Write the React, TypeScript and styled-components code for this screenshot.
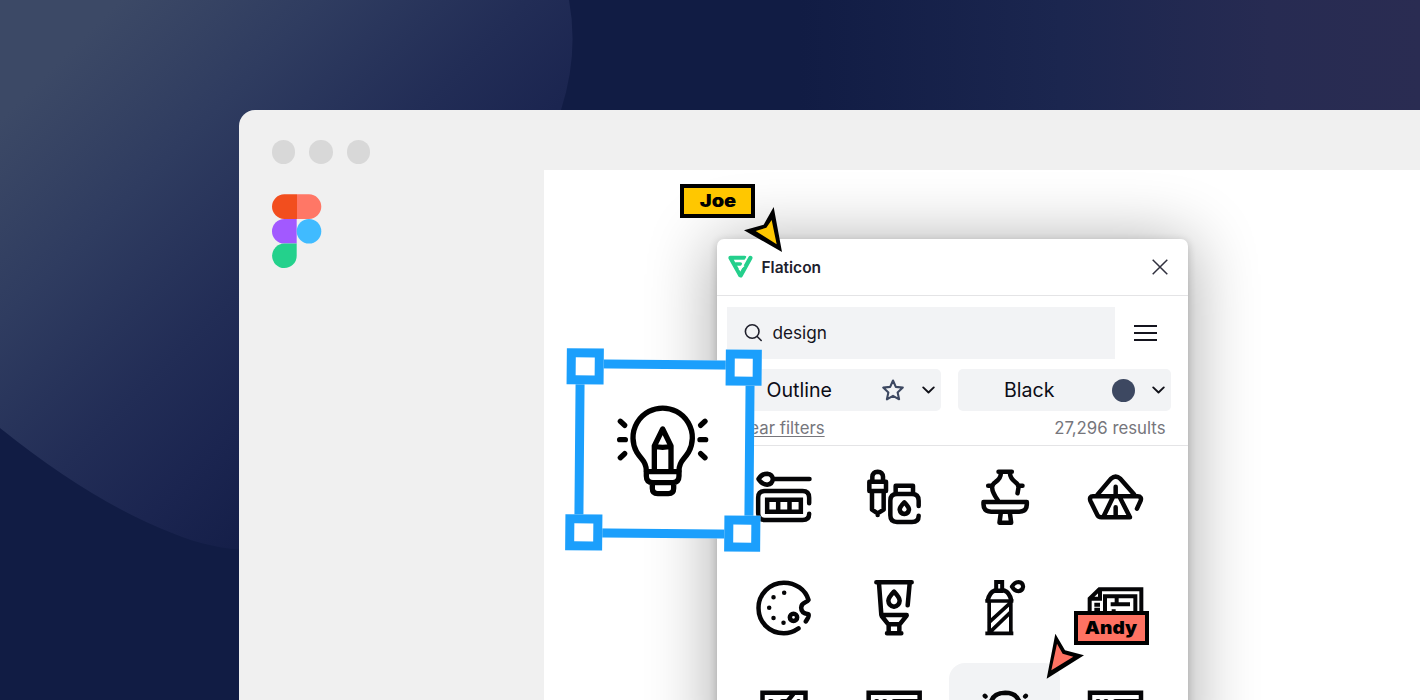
import React from "react";
import styled, { createGlobalStyle } from "styled-components";

const Global = createGlobalStyle`
  *, *::before, *::after { box-sizing: border-box; }
  body { margin: 0; overflow: hidden; font-family: Inter, "Liberation Sans", sans-serif; }
`;

const Stage = styled.main`
  position: relative;
  width: 1420px;
  height: 700px;
  overflow: hidden;
  padding: 110px 0 0 239px;
  background: linear-gradient(90deg, #111c44 0, #111c44 800px, #1b264f 1060px, #272b52 1270px, #2a2c52 1420px);
`;

const Backdrop = styled.svg`
  position: absolute;
  top: 0;
  left: 0;
`;

const Window = styled.section`
  position: relative;
  display: grid;
  grid-template: 60px 1fr / 305px 1fr;
  height: 590px;
  border-radius: 16px 0 0 0;
  background: #f0f0f0;
`;

const TitleBar = styled.header`
  grid-column: 1 / -1;
  display: flex;
  gap: 14px;
  padding: 30px 0 0 32.5px;
`;

const Dot = styled.i`
  width: 23.5px;
  height: 23.5px;
  border-radius: 50%;
  background: #d8d8d8;
`;

const Sidebar = styled.aside`
  padding: 24px 0 0 32.5px;
`;

const Canvas = styled.div`
  overflow: hidden;
  padding: 69px 0 0 173px;
  background: #fff;
`;

const Panel = styled.article`
  width: 471px;
  height: 520px;
  border-radius: 7px 7px 0 0;
  background: #fff;
  box-shadow: 0 2px 9px rgba(0, 0, 0, 0.2), 0 6px 66px 4px rgba(0, 0, 0, 0.32);
`;

const PanelHeader = styled.div`
  display: flex;
  align-items: center;
  height: 57px;
  padding: 0 20px 0 10px;
  border-bottom: 1.5px solid #e4e4e6;
`;

const PanelName = styled.h1`
  flex: 1;
  margin: 0 0 0 8.5px;
  font-size: 15.5px;
  font-weight: 600;
  color: #20202c;
`;

const SearchRow = styled.div`
  display: flex;
  align-items: center;
  gap: 19px;
  padding: 11px 0 0 10px;
`;

const SearchField = styled.div`
  display: flex;
  align-items: center;
  gap: 10px;
  width: 388px;
  height: 52px;
  padding: 0 0 2px 16.5px;
  background: #f2f3f5;
  font-size: 17.2px;
  color: #141420;
`;

const Filters = styled.div`
  display: flex;
  gap: 17px;
  padding: 10px 0 0 10px;
`;

const Filter = styled.div<{ $indent: number }>`
  display: flex;
  align-items: center;
  width: 213.5px;
  height: 42px;
  padding: 0 5px 0 ${(p) => p.$indent}px;
  border-radius: 5px;
  background: #f2f3f5;
  font-size: 19.6px;
  color: #0c0c16;
`;

const FilterLabel = styled.span`
  flex: 1;
`;

const StarIcon = styled.svg`
  margin-right: 15.5px;
`;

const Swatch = styled.i`
  width: 23px;
  height: 23px;
  margin-right: 16px;
  border-radius: 50%;
  background: #3d4861;
`;

const Summary = styled.div`
  display: flex;
  justify-content: space-between;
  height: 35px;
  padding: 7px 22.5px 0 10px;
  border-bottom: 1.5px solid #e4e4e6;
  font-size: 16.8px;
  line-height: 20px;
  color: #76767c;
`;

const ClearLink = styled.span`
  padding-left: 6px;
  text-decoration: underline;
  text-underline-offset: 2px;
  text-decoration-thickness: 1px;
`;

const IconGrid = styled.div`
  display: grid;
  grid-template-columns: repeat(4, 110.5px);
  grid-auto-rows: 110.75px;
  margin: -5px 0 0 11px;
`;

const Cell = styled.div<{ $active?: boolean }>`
  display: flex;
  align-items: center;
  justify-content: center;
  padding: 1px 0 0 1px;
  border-radius: 16px;
  background: ${(p) => (p.$active ? "#f2f3f5" : "transparent")};
`;

const Glyph = styled.svg`
  width: 60px;
  height: 60px;
  fill: none;
  stroke: #050507;
  stroke-width: 13.5px;
  stroke-linecap: round;
  stroke-linejoin: round;
`;

const Selection = styled.div`
  position: absolute;
  left: 575px;
  top: 360px;
  width: 178.5px;
  height: 178px;
  border: 9px solid #1b9ffc;
  background: #fff;
  transform: rotate(0.5deg);
`;

const Handle = styled.i<{ $right?: boolean; $bottom?: boolean }>`
  position: absolute;
  left: ${(p) => (p.$right ? 140.5 : -18)}px;
  top: ${(p) => (p.$bottom ? 146 : -20)}px;
  width: 36.5px;
  height: 36px;
  border: 9px solid #1b9ffc;
  background: #fff;
`;

const Bulb = styled.svg`
  position: absolute;
  left: 610px;
  top: 400px;
  fill: none;
  stroke: #000;
  stroke-width: 16px;
  stroke-linecap: round;
  stroke-linejoin: round;
`;

const NameTag = styled.div<{ $x: number; $y: number; $color: string }>`
  position: absolute;
  left: ${(p) => p.$x}px;
  top: ${(p) => p.$y}px;
  display: flex;
  justify-content: center;
  width: 75px;
  height: 34px;
  border: 4px solid #000;
  background: ${(p) => p.$color};
  font-size: 17.5px;
  font-weight: 900;
  line-height: 25px;
  color: #000;
`;

const Wide = styled.span<{ $scale: number }>`
  transform: scaleX(${(p) => p.$scale});
`;

const Pointer = styled.svg<{ $x: number; $y: number }>`
  position: absolute;
  left: ${(p) => p.$x}px;
  top: ${(p) => p.$y}px;
`;

const Chevron = () => (
  <svg width="15" height="10" viewBox="0 0 15 10" fill="none" stroke="#101018" strokeWidth="1.9" strokeLinecap="round" strokeLinejoin="round">
    <path d="M2.2 2.4 7.5 7.5 12.8 2.4" />
  </svg>
);

const FigmaMark = () => (
  <svg width="50" height="75" viewBox="0 0 50 75">
    <path fill="#f24e1e" d="M25 .3H12.3a12.3 12.3 0 0 0 0 24.6H25z" />
    <path fill="#ff7766" d="M25 .3h12a12.3 12.3 0 0 1 0 24.6H25z" />
    <path fill="#a259ff" d="M24.7 24.9H12.3a12.3 12.3 0 0 0 0 24.6h12.4z" />
    <circle fill="#40bbff" cx="37" cy="37.2" r="12.3" />
    <path fill="#24d18c" d="M24.7 49.5H12.3A12.3 12.3 0 1 0 24.7 62z" />
  </svg>
);

const FlaticonMark = () => (
  <svg width="26" height="24" viewBox="201 256 78 72" fill="none" stroke="#24cf8c" strokeLinejoin="round" strokeLinecap="round">
    <path d="M254 264H211L240 316" strokeWidth="12" />
    <path d="M228 283h13" strokeWidth="11" />
    <path d="M271 265 242 317" strokeWidth="13" />
    <path d="M263 259 246 287l5 2-14 11" stroke="#fff" strokeWidth="4" strokeLinecap="butt" />
  </svg>
);

const ICONS: { box: string; art: React.ReactNode }[] = [
  {
    box: "40.5 33 180 180",
    art: (
      <>
        <path d="M54 69q10-16 26-16 16 2 17 16-1 15-17 17-16-1-26-17zM97 69h110" />
        <path d="M206 142v-17q0-20-20-20H73q-20 0-20 20v47q0 20 20 20h113q20 0 20-19" />
        <path strokeLinejoin="miter" d="M80 131h101v36H80zM113 131v36M147 131v36" />
      </>
    ),
  },
  {
    box: "372 33 180 180",
    art: (
      <>
        <path d="M397 76V62q1-14 16-15 15 1 16 15v14M388 77h50v28h-50zM396 106v55l17 11 18-11v-55M413 172v5" />
        <path d="M467 108V89h52v19M536 150v-16q0-20-20-20h-45q-20 0-20 20v44q0 20 20 20h45q20 0 20-19" />
        <path d="M493 139q-14 14-14 22 2 12 14 13 12-1 14-13 0-8-14-22z" />
      </>
    ),
  },
  {
    box: "43.5 33 180 180",
    art: (
      <>
        <path d="M114 47h40M121 50q1 17-16 28-11 8-10 17 0 13 17 38M148 50q1 17 16 28 11 8 10 17l-3 17M83 89h11M175 89h11" />
        <path d="M69 138h130v7q-1 22-23 22H92q-22 0-23-22zM121 170l-4 30h35l-4-30" />
      </>
    ),
  },
  {
    box: "375 33 180 180",
    art: (
      <path d="M531 158l11-24q4-13-9-13H399q-12 0-8 13l20 41q4 9 13 9h86l-31-61M431 181l28-58M413 115l40-47q14-12 28 0l41 47M467 92v25M467 154v26" />
    ),
  },
  {
    box: "40.5 36 180 180",
    art: (
      <>
        <path d="M174 187c-16 11-30 15-44 15-44 0-76-34-76-76s34-76 76-76c35 0 65 21 74 52-5 9-22 6-22 23 0 14 10 18 22 20q3 6-8 21" />
        <circle cx="159" cy="154" r="11" />
        <path d="M131 80h.1M99 94h.1M86 125h.1M99 156h.1M129 170h.1" />
      </>
    ),
  },
  {
    box: "372 36 180 180",
    art: (
      <>
        <path d="M409 49h106M417 52l7 95h76M509 52l-6 66M425 150l20 25h34l21-26M446 177v22M478 177v22M441 202h43" />
        <path d="M462 77q-17 18-17 27 1 16 17 18 16-2 17-18 0-9-17-27z" />
      </>
    ),
  },
  {
    box: "103.5 36 180 180",
    art: (
      <>
        <path strokeLinejoin="miter" strokeWidth="12" d="M167 73V48h18v25" />
        <path d="M162 74q-15 5-20 29M192 74q15 5 20 29M165 74h22" />
        <path strokeLinecap="square" strokeWidth="11" d="M140 105h73M146 106v95M211 106v95M140 202h73M148 167l60-55M150 197l59-57" />
        <path strokeWidth="12" d="M214 62q9-14 20-14 13 1 14 14-2 13-14 14-12-1-20-14z" />
      </>
    ),
  },
  {
    box: "435 36 180 180",
    art: (
      <path
        strokeLinejoin="miter"
        strokeLinecap="butt"
        strokeWidth="12"
        d="M449 181V98l29-28h126v111H449zM480 74v24h-28M495 145V91h91v54M530 95v20M512 115h58M463 116h17M463 131h17M521 130v12"
      />
    ),
  },
  {
    box: "40.5 367.5 180 180",
    art: <path strokeLinejoin="miter" d="M66 520V382h129v138H66zM89 407h4M125 407h16l17-21M174 407v20" />,
  },
  {
    box: "372 367.5 180 180",
    art: <path strokeLinejoin="miter" d="M386 520V382h153v138H386zM409 407h2M433 407h2M462 407h77" />,
  },
  {
    box: "103.5 367.5 180 180",
    art: <path d="M133 391l2 2M256 391l-2 2M149 428q0-45 45-46 45 1 45 46" />,
  },
  {
    box: "435 367.5 180 180",
    art: <path strokeLinejoin="miter" d="M450 520V382h153v138H450zM473 407h2M497 407h2M526 407h77" />,
  },
];

export default function App() {
  return (
    <>
      <Global />
      <Stage>
        <Backdrop width="1420" height="700">
          <defs>
            <linearGradient id="glow" gradientUnits="userSpaceOnUse" x1="60" y1="60" x2="400" y2="400">
              <stop offset="0" stopColor="#3c4966" />
              <stop offset=".3" stopColor="#2f3c60" />
              <stop offset=".6" stopColor="#222d56" />
              <stop offset=".8" stopColor="#1b2550" />
              <stop offset="1" stopColor="#141e48" />
            </linearGradient>
          </defs>
          <path fill="url(#glow)" d="M0 0H569Q579 54 561 110C500 350 380 620 172 533Q92 502 0 428Z" />
        </Backdrop>
        <Window>
          <TitleBar>
            <Dot />
            <Dot />
            <Dot />
          </TitleBar>
          <Sidebar>
            <FigmaMark />
          </Sidebar>
          <Canvas>
            <Panel>
              <PanelHeader>
                <FlaticonMark />
                <PanelName>Flaticon</PanelName>
                <svg width="16" height="16" viewBox="0 0 16 16" fill="none" stroke="#30303e" strokeWidth="1.5">
                  <path d="M.7.7 15.3 15.3M15.3.7.7 15.3" />
                </svg>
              </PanelHeader>
              <SearchRow>
                <SearchField>
                  <svg width="19" height="19" viewBox="0 0 19 19" fill="none" stroke="#20202c" strokeWidth="1.6" strokeLinecap="round">
                    <circle cx="8.2" cy="8.5" r="6.8" />
                    <path d="m13.2 13.5 4 4" />
                  </svg>
                  design
                </SearchField>
                <svg width="23" height="17" viewBox="0 0 23 17" stroke="#14141e" strokeWidth="2">
                  <path d="M0 1h23M0 8h23M0 15h23" />
                </svg>
              </SearchRow>
              <Filters>
                <Filter $indent={39.5}>
                  <FilterLabel>Outline</FilterLabel>
                  <StarIcon width="24" height="24" viewBox="0 0 24 24" fill="none" stroke="#3d4861" strokeWidth="2.1" strokeLinejoin="round">
                    <path d="M12 2.500 14.800 8.900l7 .7-5.200 4.800 1.500 6.900L12 17.800l-6.100 3.500 1.500-6.900L2.200 9.600l7-.7z" />
                  </StarIcon>
                  <Chevron />
                </Filter>
                <Filter $indent={46.5}>
                  <FilterLabel>Black</FilterLabel>
                  <Swatch />
                  <Chevron />
                </Filter>
              </Filters>
              <Summary>
                <ClearLink>Clear filters</ClearLink>
                <span>27,296 results</span>
              </Summary>
              <IconGrid>
                {ICONS.map((icon, i) => (
                  <Cell key={i} $active={i === 10}>
                    <Glyph viewBox={icon.box}>{icon.art}</Glyph>
                  </Cell>
                ))}
              </IconGrid>
            </Panel>
          </Canvas>
        </Window>

        <Selection>
          <Handle />
          <Handle $right />
          <Handle $bottom />
          <Handle $right $bottom />
        </Selection>
        <Bulb width="106" height="100" viewBox="180 180 318 300">
          <path d="M289 392q0-20-14-36-8-9-15-20A89 89 0 1 1 416 336q-7 11-15 20-14 16-14 36" />
          <path d="M289 395h98v13q0 20-20 20h-58q-20 0-20-20zM307 430v15q0 16 16 16h32q16 0 16-16v-15" />
          <path d="M313 392v-74l25-51 25 51v74M313 318q25 8 50 0" />
          <path d="m211 244 13 12M209 299h17M211 353l13-12M465 244l-13 12M467 299h-17M465 353l-13-12" />
        </Bulb>

        <NameTag $x={680} $y={184} $color="#ffc700">
          <Wide $scale={1.14}>Joe</Wide>
        </NameTag>
        <Pointer $x={740} $y={205} width="48" height="52" viewBox="240 102 144 156">
          <path d="M341 108 366 243 252 178 311 161z" fill="#000" />
          <path d="M335 147 350 220 287 180 319 170z" fill="#ffc700" />
        </Pointer>
        <NameTag $x={1073.5} $y={610.5} $color="#ff7262">
          <Wide $scale={1.09}>Andy</Wide>
        </NameTag>
        <Pointer $x={1040} $y={628} width="52" height="54" viewBox="300 189 156 162">
          <path d="M346 206 375 256 432 271 320 341z" fill="#000" />
          <path d="M351 236 368 266 400 275 334 316z" fill="#ff7262" />
        </Pointer>
      </Stage>
    </>
  );
}
